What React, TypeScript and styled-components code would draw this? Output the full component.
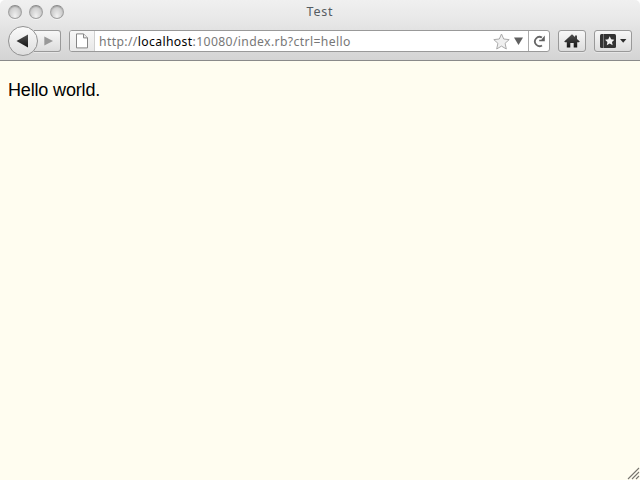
import React from 'react';
import styled, { createGlobalStyle } from 'styled-components';

const GlobalStyle = createGlobalStyle`
  * { box-sizing: border-box; }
  body { margin: 0; background: #fff; overflow: hidden; }
`;

const Window = styled.div`
  display: flex;
  flex-direction: column;
  width: 640px;
  height: 480px;
  overflow: hidden;
  font-family: "Noto Sans", sans-serif;
`;

const Chrome = styled.header`
  flex: none;
  height: 61px;
  border-radius: 5px 5px 0 0;
  border-bottom: 1px solid #8a8a8a;
  background: linear-gradient(#f0f0f0 0, #e8e8e8 20px, #e2e2e2 30px, #d4d4d4 60px);
`;

const TitleBar = styled.div`
  display: grid;
  grid-template-columns: 1fr auto 1fr;
  align-items: center;
  height: 22px;
  padding: 1px 0 0 8px;
`;

const Lights = styled.div`
  display: flex;
  gap: 7px;
`;

const Light = styled.span`
  width: 14px;
  height: 14px;
  border-radius: 50%;
  border: 1px solid #a0a0a0;
  border-top-color: #888;
  background: radial-gradient(ellipse at 50% 85%, #f2f2f2 0, #d8d8d8 45%, #bebebe 100%);
  box-shadow: inset 0 1px 1px rgba(80, 80, 80, 0.3), 0 1px 0 #f4f4f4;
`;

const Title = styled.h1`
  margin: 0 8px 0 0;
  color: #555c62;
  font-size: 12.5px;
  font-weight: 400;
  line-height: 18px;
  letter-spacing: 0.8px;
`;

const Toolbar = styled.div`
  display: flex;
  align-items: center;
  height: 38px;
  padding: 0 8px 0 8px;
`;

const NavButtons = styled.div`
  display: flex;
  align-items: center;
  width: 53px;
  margin-right: 8px;
`;

const BackButton = styled.button`
  display: flex;
  flex: none;
  align-items: center;
  justify-content: center;
  width: 30px;
  height: 30px;
  padding: 0;
  border: 1px solid #929292;
  border-radius: 50%;
  background: linear-gradient(#fafafa, #dedede);
  z-index: 1;
`;

const Button = styled.button<{ $width: number }>`
  display: flex;
  flex: none;
  align-items: center;
  justify-content: center;
  width: ${({ $width }) => $width}px;
  height: 22px;
  padding: 0;
  border: 1px solid #999;
  border-radius: 3px;
  background: linear-gradient(#f8f8f8, #dcdcdc);
  box-shadow: 0 1px 0 rgba(255, 255, 255, 0.35);
`;

const ForwardButton = styled(Button)`
  margin-left: -4px;
  padding-left: 2px;
  border-left: 0;
  border-radius: 0 3px 3px 0;
`;

const LocationBar = styled.div`
  display: flex;
  width: 481px;
  height: 22px;
  margin-right: 8px;
  overflow: hidden;
  border: 1px solid #999;
  border-radius: 3px;
  background: #fff;
`;

const Identity = styled.div`
  display: flex;
  align-items: center;
  justify-content: center;
  width: 25px;
  border-right: 1px solid #d0d0d0;
  background: linear-gradient(#f7f7f7, #e8e8e8);
`;

const Address = styled.div`
  flex: 1;
  padding-left: 4px;
  color: #777;
  font-size: 12.2px;
  line-height: 22px;
  letter-spacing: 0.37px;
  white-space: pre;
`;

const Host = styled.span`
  color: #000;
`;

const BarActions = styled.div`
  display: flex;
  align-items: center;
  gap: 4px;
  padding-right: 5px;
`;

const Reload = styled.div`
  display: flex;
  align-items: center;
  justify-content: center;
  width: 21px;
  border-left: 1px solid #aaa;
`;

const EndButtons = styled.div`
  display: flex;
  gap: 8px;
`;

const Page = styled.main`
  display: flex;
  flex: 1;
  flex-direction: column;
  justify-content: space-between;
  background: #fffdf0;
`;

const Greeting = styled.p`
  margin: 16px 8px;
  color: #000;
  font-family: "Liberation Sans", sans-serif;
  font-size: 18px;
  line-height: 26px;
  letter-spacing: -0.16px;
`;

const Grip = styled.svg`
  align-self: flex-end;
`;

export default function App() {
  return (
    <Window>
      <GlobalStyle />
      <Chrome>
        <TitleBar>
          <Lights><Light /><Light /><Light /></Lights>
          <Title>Test</Title>
        </TitleBar>
        <Toolbar>
          <NavButtons>
            <BackButton aria-label="Back">
              <svg width="14" height="14" viewBox="0 0 14 14">
                <defs>
                  <linearGradient id="dark" x1="0" y1="0" x2="0" y2="1">
                    <stop offset="0" stopColor="#505050" /><stop offset="1" stopColor="#151515" />
                  </linearGradient>
                </defs>
                <path d="M.5 7 12 .6v12.8Z" fill="url(#dark)" />
              </svg>
            </BackButton>
            <ForwardButton $width={27} aria-label="Forward">
              <svg width="9" height="10" viewBox="0 0 9 10"><path d="M.3.5 9 5 .3 9.5Z" fill="#989898" /></svg>
            </ForwardButton>
          </NavButtons>
          <LocationBar>
            <Identity>
              <svg width="12" height="16" viewBox="0 0 12 16">
                <path d="M.5.9h7l4 4v10H.5Z" fill="#fff" stroke="#858585" />
                <path d="M7.5.9v4h4" fill="#eee" stroke="#858585" />
              </svg>
            </Identity>
            <Address>http://<Host>localhost</Host>:10080/index.rb?ctrl=hello</Address>
            <BarActions>
              <svg width="17" height="17" viewBox="0 0 17 17">
                <path d="m8.5 1 2.2 5 5.5.6-4.1 3.7 1.2 5.7-4.8-2.9L3.7 16l1.2-5.7L.8 6.6 6.3 6Z" fill="#f0f0f0" stroke="#a9a9a9" strokeLinejoin="round" />
              </svg>
              <svg width="9" height="8" viewBox="0 0 9 8"><path d="M0 .5h9L4.5 8Z" fill="#606060" /></svg>
            </BarActions>
            <Reload>
              <svg width="13" height="13" viewBox="0 0 13 13">
                <path d="M9 2.6A4.6 4.6 0 1 0 9 10.4" fill="none" stroke="#666" strokeWidth="1.8" />
                <path d="M11.8.6v5.6H6.2V4.7h2.1Z" fill="#606060" />
              </svg>
            </Reload>
          </LocationBar>
          <EndButtons>
            <Button $width={28} aria-label="Home">
              <svg width="16" height="14" viewBox="0 0 16 14">
                <path d="M8 .3 11 3V1.5h2v3.4l2.8 2.5-.8.9h-1.8v5.2H9.7V9H6.3v4.5H2.8V8.3H1l-.8-.9Z" fill="url(#dark)" />
              </svg>
            </Button>
            <Button $width={38} aria-label="Bookmarks">
              <svg width="28" height="14" viewBox="0 0 28 14">
                <rect x="1" y="0" width="16" height="14" rx="1.5" fill="#333" />
                <path d="M4.5 0v14" stroke="#777" />
                <path d="m10.7 2.3 1.4 3 3.3.4-2.4 2.2.6 3.3-2.9-1.7-2.9 1.7.6-3.3L6 5.7l3.3-.4Z" fill="#f2f2f2" />
                <path d="M21 5h6.4l-3.2 3.8Z" fill="#2d2d2d" />
              </svg>
            </Button>
          </EndButtons>
        </Toolbar>
      </Chrome>
      <Page>
        <Greeting>Hello world.</Greeting>
        <Grip width="13" height="13" viewBox="0 0 13 13">
          <path d="M1 12 12 1M5 12l7-7M9 12l3-3" stroke="#77756e" strokeWidth="1.1" />
        </Grip>
      </Page>
    </Window>
  );
}
